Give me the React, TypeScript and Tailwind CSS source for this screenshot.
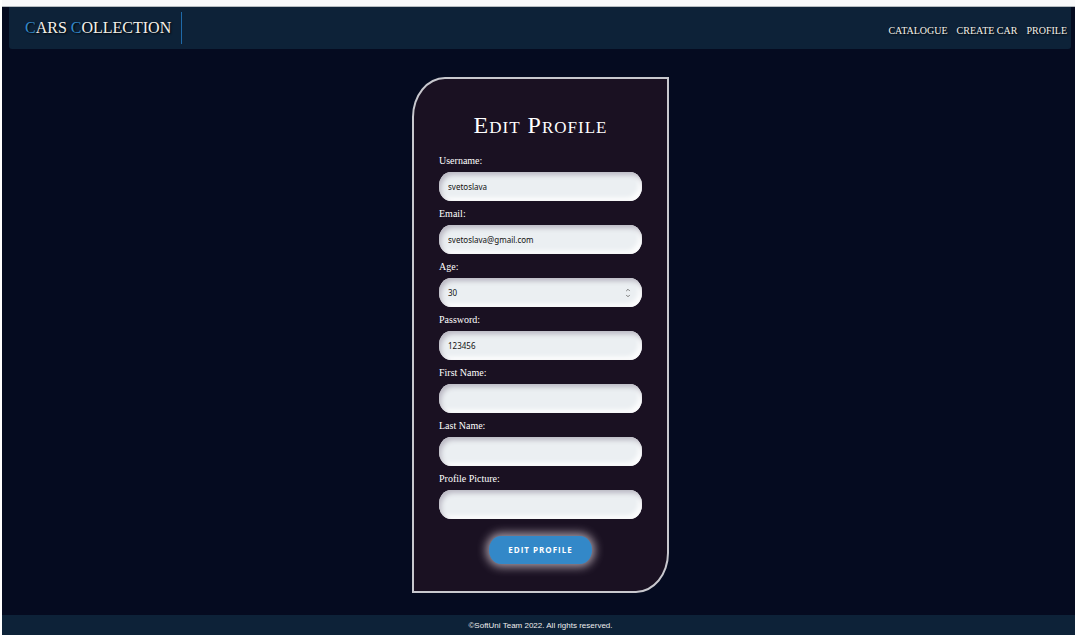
import { ChevronDown, ChevronUp } from "lucide-react";

type Field = {
  id: string;
  label: string;
  type: string;
  value: string;
};

const fields: Field[] = [
  { id: "username", label: "Username:", type: "text", value: "svetoslava" },
  { id: "email", label: "Email:", type: "text", value: "svetoslava@gmail.com" },
  { id: "age", label: "Age:", type: "number", value: "30" },
  { id: "password", label: "Password:", type: "text", value: "123456" },
  { id: "first-name", label: "First Name:", type: "text", value: "" },
  { id: "last-name", label: "Last Name:", type: "text", value: "" },
  { id: "profile-picture", label: "Profile Picture:", type: "text", value: "" },
];

function Header() {
  return (
    <header className="ml-[7px] mr-1 flex h-[42px] items-center justify-between rounded-b-[3px] bg-[#0d2238] pl-4 pr-1 font-['Liberation_Serif',serif] text-[#f4f1ea] [text-shadow:1px_1px_2px_#000]">
      <a
        href="#home"
        className="flex h-8 items-center border-r border-[#1f6aa8] pr-2.5 text-[16px]"
      >
        <span>
          <span className="text-[#3388c8]">C</span>ARS{" "}
          <span className="text-[#3388c8]">C</span>OLLECTION
        </span>
      </a>
      <nav className="flex gap-[9px] pt-1 text-[10px]">
        <a href="#catalogue">CATALOGUE</a>
        <a href="#create">CREATE CAR</a>
        <a href="#profile">PROFILE</a>
      </nav>
    </header>
  );
}

function FormField({ id, label, type, value }: Field) {
  return (
    <div className="flex flex-col gap-1">
      <label
        htmlFor={id}
        className="pt-0.5 font-['Liberation_Serif',serif] text-[10px] leading-[14px] text-white"
      >
        {label}
      </label>
      <div className="relative">
        <input
          id={id}
          type={type}
          defaultValue={value}
          className="block h-[29px] w-full rounded-[12px/14px] bg-[#ebeff2] px-[9px] font-['Noto_Sans',sans-serif] text-[8px] text-[#111] shadow-[inset_2px_3px_5px_#b9b7c2,inset_-3px_-3px_5px_#fff] outline-none [appearance:textfield] [&::-webkit-inner-spin-button]:appearance-none"
        />
        {type === "number" && (
          <span className="pointer-events-none absolute inset-y-0 right-[11px] flex flex-col items-center justify-center text-[#777]">
            <ChevronUp size={6} strokeWidth={4} />
            <ChevronDown size={6} strokeWidth={4} />
          </span>
        )}
      </div>
    </div>
  );
}

export default function App() {
  return (
    <div className="flex min-h-screen flex-col bg-white px-0.5 pb-0.5">
      <div className="h-[7px] border-b border-[#b6bcc0] bg-[#f8f9fa]" />
      <div className="flex grow flex-col bg-[#050b20]">
        <Header />
        <main className="flex grow flex-col items-center pb-[22px] pl-1 pt-7">
          <form className="flex w-[257px] flex-col gap-1 rounded-[33px_0/40px_0] border-2 border-[#c8c8ce] bg-[#1a1122] px-[25px] pb-[27px] pt-8">
            <h1 className="mb-[9px] text-center font-['Liberation_Serif',serif] text-[24px] leading-7 tracking-[1px] text-white [font-variant:small-caps]">
              Edit Profile
            </h1>
            {fields.map((field) => (
              <FormField key={field.id} {...field} />
            ))}
            <button
              type="button"
              className="mt-[13px] h-7 self-center rounded-[12px/14px] bg-[#3388c8] px-[19px] font-['Open_Sans',sans-serif] text-[8px] font-bold uppercase tracking-[1px] text-white shadow-[0_0_10px_3px_#a79ca7]"
            >
              Edit Profile
            </button>
          </form>
        </main>
        <footer className="bg-[#0d2238] pl-1 pt-0.5 text-center font-['Liberation_Sans',sans-serif] text-[8px] leading-[18px] text-[#eee]">
          ©SoftUni Team 2022. All rights reserved.
        </footer>
      </div>
    </div>
  );
}
